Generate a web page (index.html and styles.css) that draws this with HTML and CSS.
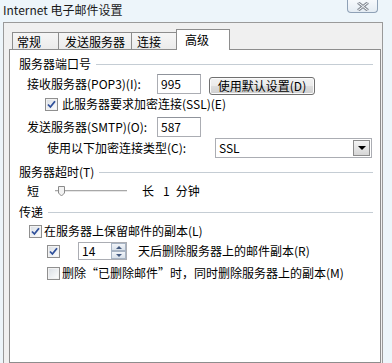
FILE: index.html
```html
<!DOCTYPE html>
<html>
	<head>
		<meta charset="utf-8">
		<title>Internet 电子邮件设置</title>
		<link rel="stylesheet" href="styles.css">
	</head>
	<body>
		<div class="titlebar">
			<span class="title">Internet 电子邮件设置</span>
			<span class="close">
				<svg width="14" height="9" viewBox="0 0 14 9">
					<path d="M2 0.5 L12 8.5 M12 0.5 L2 8.5" stroke="#8a9099" stroke-width="3" fill="none"/>
					<path d="M2 0.5 L12 8.5 M12 0.5 L2 8.5" stroke="#f4f7fa" stroke-width="1" fill="none"/>
				</svg>
			</span>
		</div>
		<div class="frame">
			<ul class="tabs">
				<li class="tab t1">常规</li>
				<li class="tab t2">发送服务器</li>
				<li class="tab t3">连接</li>
				<li class="tab t4 cur">高级</li>
			</ul>
			<div class="panel">
				<!-- 服务器端口号 -->
				<div class="group g1"><span>服务器端口号</span><i></i></div>
				<div class="row r-pop">
					<span class="lbl">接收服务器(POP3)(I):</span>
					<span class="field">995</span>
					<span class="btn">使用默认设置(D)</span>
				</div>
				<div class="row r-ssl">
					<span class="check"><svg width="9" height="9" viewBox="0 0 9 9"><path d="M1 4.5 L3.4 7 L8 1.2" stroke="#2e4f9a" stroke-width="1.8" fill="none"/></svg></span>
					<span>此服务器要求加密连接(SSL)(E)</span>
				</div>
				<div class="row r-smtp">
					<span class="lbl">发送服务器(SMTP)(O):</span>
					<span class="field">587</span>
				</div>
				<div class="row r-enc">
					<span class="lbl-enc">使用以下加密连接类型(C):</span>
					<span class="select"><span>SSL</span><span class="arrow"><b></b></span></span>
				</div>

				<!-- 服务器超时 -->
				<div class="group g2"><span>服务器超时(T)</span><i></i></div>
				<div class="row r-slide">
					<span>短</span>
					<svg class="slider" width="72" height="14" viewBox="0 0 72 14">
						<rect x="0" y="6" width="72" height="1" fill="#a8a8a8"/>
						<rect x="0" y="7" width="72" height="1" fill="#e6e6e6"/>
						<path d="M3.5 2.5 H9.5 V9 L6.5 12 L3.5 9 Z" fill="#f2f2f2" stroke="#8a8a8a" stroke-width="1"/>
					</svg>
					<span class="long">长</span>
					<span class="num">1</span>
					<span class="unit">分钟</span>
				</div>

				<!-- 传递 -->
				<div class="group g3"><span>传递</span><i></i></div>
				<div class="row r-keep">
					<span class="check"><svg width="9" height="9" viewBox="0 0 9 9"><path d="M1 4.5 L3.4 7 L8 1.2" stroke="#2e4f9a" stroke-width="1.8" fill="none"/></svg></span>
					<span>在服务器上保留邮件的副本(L)</span>
				</div>
				<div class="row r-days">
					<span class="check"><svg width="9" height="9" viewBox="0 0 9 9"><path d="M1 4.5 L3.4 7 L8 1.2" stroke="#2e4f9a" stroke-width="1.8" fill="none"/></svg></span>
					<span class="spin">
						<span class="spin-val">14</span>
						<span class="spin-btns">
							<span class="sb up"><b></b></span>
							<span class="sb down"><b></b></span>
						</span>
					</span>
					<span class="days">天后删除服务器上的邮件副本(R)</span>
				</div>
				<div class="row r-del">
					<span class="check off"></span>
					<span>删除“已删除邮件”时，同时删除服务器上的副本(M)</span>
				</div>
			</div>
		</div>
	</body>
</html>
```

FILE: styles.css
```css
* {
	box-sizing: border-box;
}

body {
	margin: 0;
	width: 392px;
	height: 363px;
	overflow: hidden;
	background: #edf5fa;
	font-family: "Noto Sans CJK SC", sans-serif;
	font-size: 12px;
	color: #000;
}

.titlebar {
	display: flex;
	justify-content: space-between;
	align-items: flex-start;
	height: 22px;
}

.title {
	padding: 1px 0 0 3px;
	line-height: 18px;
	color: #1a1a1a;
}

.close {
	display: flex;
	align-items: center;
	justify-content: center;
	width: 31px;
	height: 13px;
	margin-right: 14px;
	border: 1px solid #8fa1b6;
	border-top: none;
	border-radius: 0 0 4px 4px;
	background: linear-gradient(#f6f9fc, #e4ecf3);
}

.frame {
	margin-left: 3px;
	width: 380px;
	height: 342px;
	border: 1px solid #9a9a9a;
	background: #f0f0f0;
}

/* 选项卡 */
.tabs {
	list-style: none;
	margin: 0;
	padding: 0 0 0 8px;
	display: flex;
	align-items: flex-end;
	height: 26px;
}

.tab {
	height: 17px;
	padding-top: 2px;
	line-height: 14px;
	border: 1px solid #8d8d8d;
	border-bottom: none;
	background: linear-gradient(#f6f6f6, #ebebeb);
	white-space: nowrap;
}

.t1 { width: 47px; padding-left: 4px; }
.t2 { width: 74px; padding-left: 6px; margin-left: -1px; }
.t3 { width: 46px; padding-left: 5px; margin-left: -1px; }
.t4 { width: 54px; padding-left: 8px; margin-left: -1px; }

.tab.cur {
	height: 21px;
	padding-top: 3px;
	background: #fff;
	position: relative;
	top: 1px;
	z-index: 1;
}

.panel {
	margin-left: 5px;
	width: 372px;
	height: 314px;
	padding: 0 7px 0 0;
	border: 1px solid #8d8d8d;
	background: #fff;
}

/* 分组标题 */
.group {
	display: flex;
	align-items: center;
	height: 16px;
	padding-left: 9px;
	line-height: 16px;
	white-space: nowrap;
}

.group i {
	flex: 1;
	height: 1px;
	margin-left: 5px;
	background: #c5cdd4;
}

.g1 { margin-top: 6px; }
.g2 { margin-top: 6px; }
.g3 { margin-top: 4px; }

.row {
	display: flex;
	align-items: center;
	line-height: 16px;
	white-space: nowrap;
}

.r-pop { margin-top: 2px; height: 20px; padding-left: 17px; }
.r-ssl { margin-top: 3px; height: 14px; padding-left: 35px; }
.r-smtp { margin-top: 6px; height: 20px; padding-left: 17px; }
.r-enc { margin-top: 1px; height: 20px; padding-left: 37px; }
.r-slide { margin-top: 2px; height: 18px; padding-left: 17px; }
.r-keep { margin-top: 4px; height: 14px; padding-left: 19px; }
.r-days { margin-top: 4px; height: 18px; padding-left: 37px; }
.r-del { margin-top: 6px; height: 14px; padding-left: 37px; }

.lbl {
	width: 130px;
}

.lbl-enc {
	width: 168px;
}

.field {
	width: 44px;
	height: 20px;
	padding-left: 3px;
	line-height: 18px;
	border: 1px solid #abadb3;
	border-top-color: #8f939b;
	background: #fff;
}

.btn {
	align-self: flex-start;
	margin: 3px 0 0 8px;
	width: 106px;
	height: 18px;
	line-height: 16px;
	text-align: center;
	border: 1px solid #707070;
	border-radius: 3px;
	background: linear-gradient(#f2f2f2 0%, #ebebeb 50%, #dddddd 51%, #cfcfcf 100%);
	box-shadow: inset 0 0 0 1px #fbfbfb;
}

.check {
	flex: none;
	display: flex;
	align-items: center;
	justify-content: center;
	width: 13px;
	height: 13px;
	margin-right: 4px;
	border: 1px solid #8f8f8f;
	background: linear-gradient(135deg, #d8dde3, #ffffff);
	box-shadow: inset 0 0 0 1px #f2f2f2;
}

.r-keep .check,
.r-del .check {
	margin-right: 2px;
}

.select {
	display: flex;
	align-items: center;
	justify-content: space-between;
	width: 157px;
	height: 20px;
	padding: 0 1px 0 3px;
	border: 1px solid #abadb3;
	background: #fff;
}

.arrow {
	display: flex;
	align-items: center;
	justify-content: center;
	width: 17px;
	height: 16px;
	border: 1px solid #8c8c8c;
	background: linear-gradient(#f4f4f4, #d6d6d6);
}

.arrow b {
	width: 0;
	height: 0;
	border-left: 4px solid transparent;
	border-right: 4px solid transparent;
	border-top: 4px solid #000;
}

.slider {
	margin-left: 16px;
}

.long { margin-left: 15px; }
.num { margin-left: 9px; }
.unit { margin-left: 6px; }

.spin {
	display: flex;
	align-items: center;
	justify-content: space-between;
	margin-left: 14px;
	width: 49px;
	height: 18px;
	padding: 0 0 0 3px;
	border: 1px solid #abadb3;
	background: #fff;
}

.spin-btns {
	display: flex;
	flex-direction: column;
	width: 15px;
	height: 16px;
}

.sb {
	display: flex;
	align-items: center;
	justify-content: center;
	height: 8px;
	border: 1px solid #a7b3c3;
	background: linear-gradient(#f1f4f8, #d9e1ea);
}

.sb b {
	width: 0;
	height: 0;
	border-left: 3px solid transparent;
	border-right: 3px solid transparent;
}

.up b { border-bottom: 3px solid #445a80; }
.down b { border-top: 3px solid #445a80; }

.days {
	margin-left: 11px;
}
```
